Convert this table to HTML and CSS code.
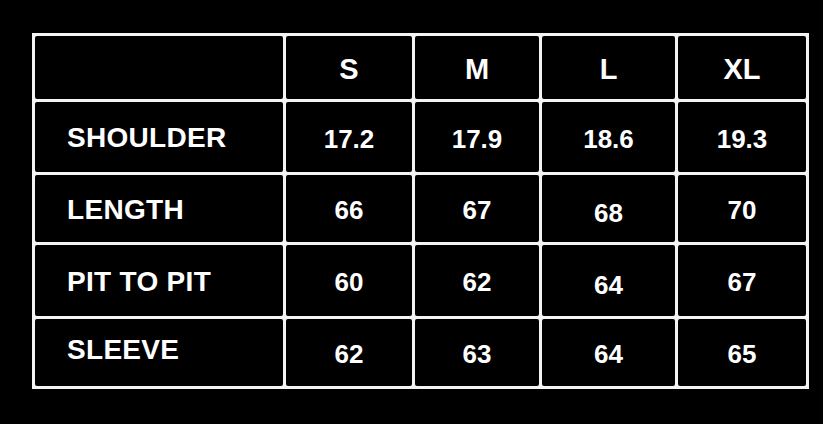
FILE: index.html
```html
<!DOCTYPE html>
<html lang="en">
<head>
<meta charset="utf-8">
<title>Size Chart</title>
<link rel="stylesheet" href="styles.css">
</head>
<body>
<div class="page">
  <div class="chart">
    <div class="cell head"></div>
    <div class="cell head size">S</div>
    <div class="cell head size">M</div>
    <div class="cell head size">L</div>
    <div class="cell head size">XL</div>

    <div class="cell label">SHOULDER</div>
    <div class="cell val">17.2</div>
    <div class="cell val">17.9</div>
    <div class="cell val">18.6</div>
    <div class="cell val">19.3</div>

    <div class="cell label">LENGTH</div>
    <div class="cell val">66</div>
    <div class="cell val">67</div>
    <div class="cell val low">68</div>
    <div class="cell val">70</div>

    <div class="cell label">PIT TO PIT</div>
    <div class="cell val">60</div>
    <div class="cell val">62</div>
    <div class="cell val low">64</div>
    <div class="cell val">67</div>

    <div class="cell label high">SLEEVE</div>
    <div class="cell val">62</div>
    <div class="cell val">63</div>
    <div class="cell val">64</div>
    <div class="cell val">65</div>
  </div>
</div>
</body>
</html>
```

FILE: styles.css
```css
html, body {
  margin: 0;
  padding: 0;
  background: #000;
}

.page {
  width: 823px;
  height: 424px;
  box-sizing: border-box;
  padding: 33px 0 0 32px;
  background: #000;
}

.chart {
  display: grid;
  grid-template-columns: 248px 126px 124px 133px 128px;
  grid-template-rows: 63px 70px 67px 71px 67px;
  gap: 3px;
  padding: 3px;
  width: max-content;
  background: #f4f4f4;
  font-family: "Liberation Sans", Arial, sans-serif;
  font-weight: bold;
  color: #fff;
}

.cell {
  background: #000;
  display: flex;
  align-items: center;
  border-radius: 2px;
}

.size {
  justify-content: center;
  font-size: 29px;
  padding-top: 3px;
}

.label {
  padding-left: 32px;
  font-size: 28px;
  letter-spacing: 0.3px;
  padding-top: 2px;
}

.label.high {
  padding-top: 0;
  padding-bottom: 6px;
}

.val {
  justify-content: center;
  font-size: 26px;
  padding-top: 4px;
}

.val.low {
  padding-top: 9px;
}
```
